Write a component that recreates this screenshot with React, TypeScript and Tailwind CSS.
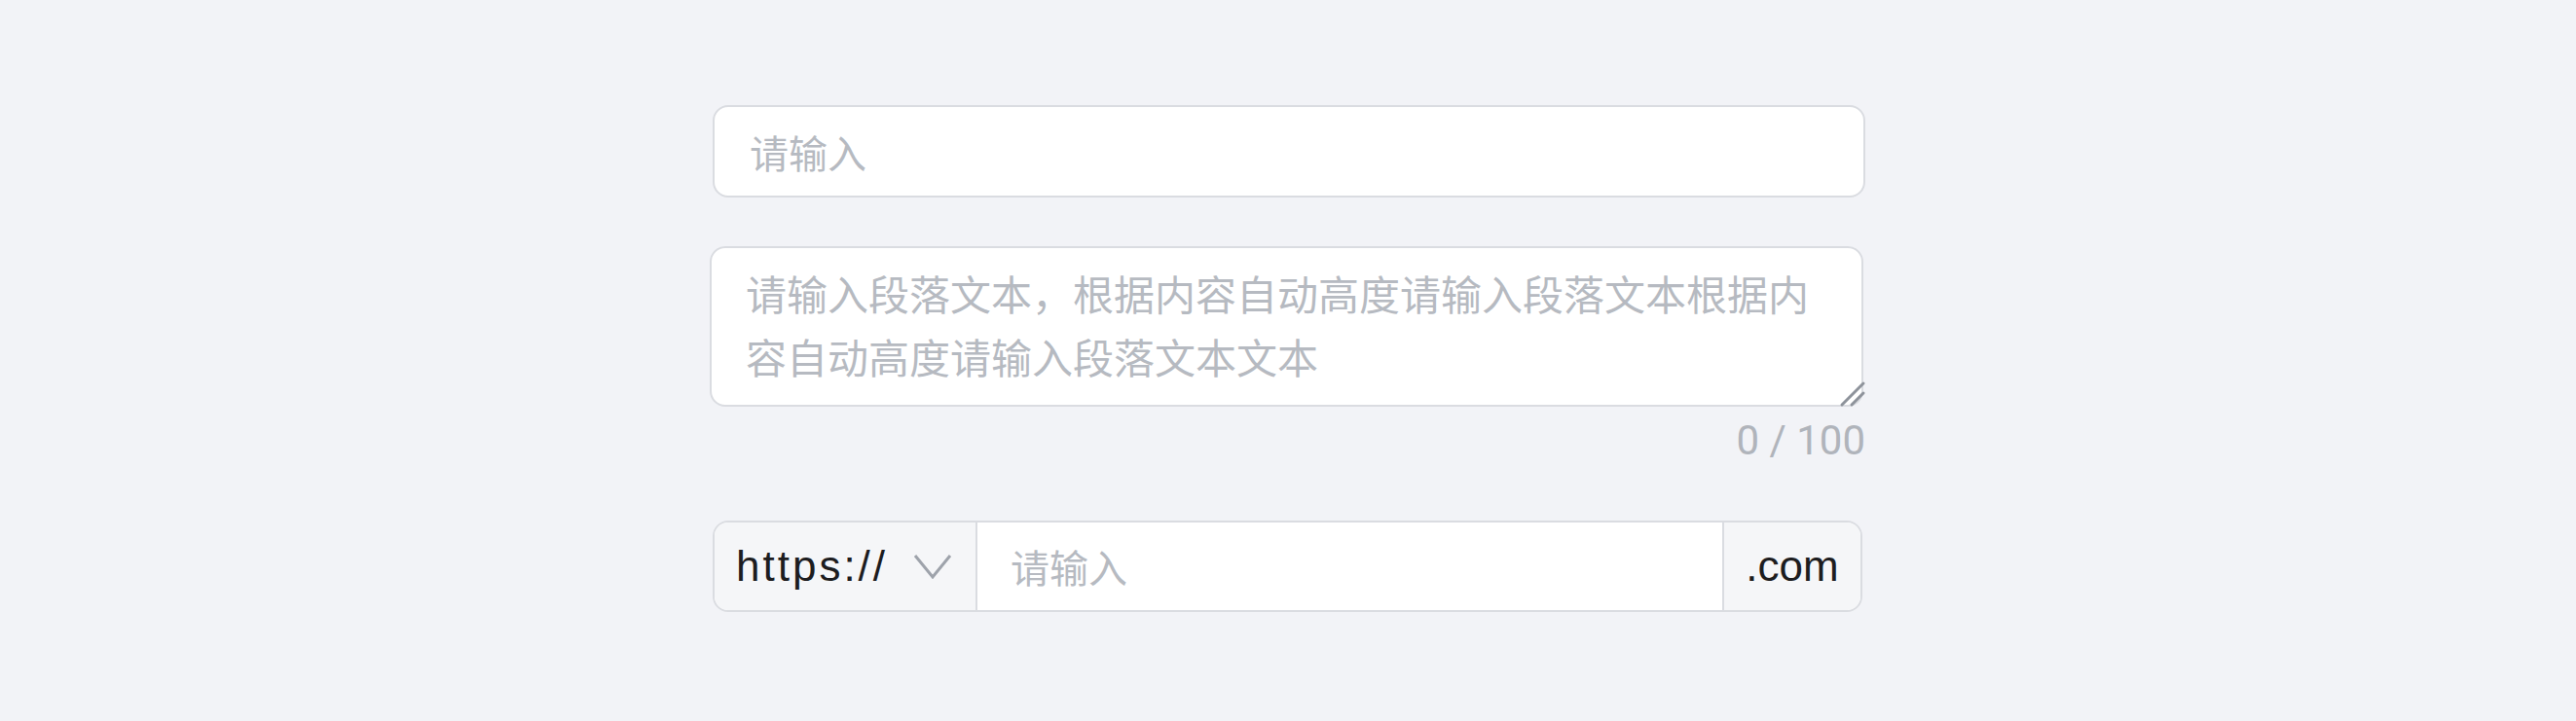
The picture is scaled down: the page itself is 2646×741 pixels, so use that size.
import React from "react";

export default function App() {
  const cjk = { fontFamily: '"Noto Sans CJK SC", "Noto Sans", sans-serif' };
  return (
    <div className="min-h-[741px] w-full bg-[#f2f3f7] pt-[108px]" style={cjk}>
      <div className="mx-auto flex w-[1184px] translate-x-[1px] flex-col">
        {/* Input 1 */}
        <input
          className="h-[95px] w-full rounded-[16px] border-2 border-[#dadce1] bg-white px-[36px] text-[40px] text-[#1f2329] outline-none placeholder:text-[#b6bac1]"
          placeholder="请输入"
        />

        {/* Textarea */}
        <div className="relative ml-[-3px] mt-[50px] w-[1185px]">
          <textarea
            className="block h-[165px] w-full resize-none rounded-[16px] border-2 border-[#dadce1] bg-white pb-[10px] pl-[35px] pr-[40px] pt-[13px] text-[42px] leading-[65px] text-[#1f2329] outline-none placeholder:text-[#b6bac1]"
            placeholder="请输入段落文本，根据内容自动高度请输入段落文本根据内容自动高度请输入段落文本文本"
          />
          <svg
            className="absolute bottom-[-3px] right-[-3px]"
            width="30"
            height="30"
            viewBox="0 0 30 30"
          >
            <line x1="5" y1="25" x2="27" y2="3" stroke="#8e939b" strokeWidth="3" strokeLinecap="round" />
            <line x1="15" y1="25" x2="27" y2="13" stroke="#8e939b" strokeWidth="3" strokeLinecap="round" />
          </svg>
        </div>

        {/* Counter */}
        <div
          className="mt-[10px] h-[50px] text-right text-[42px] leading-[50px] text-[#b0b4bb]"
          style={{ fontFamily: 'Roboto, "Noto Sans", sans-serif' }}
        >
          0 / 100
        </div>

        {/* Group */}
        <div className="mt-[57px] flex h-[94px] w-[1181px] overflow-hidden rounded-[16px] border-2 border-[#dadce1] bg-white">
          <div
            className="flex w-[270px] shrink-0 items-center justify-between border-r-2 border-[#dadce1] bg-[#f5f6f8] pl-[22px] pr-[24px] text-[44px] tracking-[3px] text-[#1d1d1f]"
            style={{ fontFamily: '"Liberation Sans", Arial, sans-serif' }}
          >
            <span>https://</span>
            <svg width="40" height="26" viewBox="0 0 40 26">
              <polyline points="2,2 20,24 38,2" fill="none" stroke="#9ea3ab" strokeWidth="3" />
            </svg>
          </div>
          <input
            className="min-w-0 flex-1 bg-white px-[34px] text-[40px] text-[#1f2329] outline-none placeholder:text-[#b6bac1]"
            placeholder="请输入"
          />
          <div
            className="flex w-[142px] shrink-0 items-center justify-center border-l-2 border-[#dadce1] bg-[#f5f6f8] text-[44px] text-[#1d1d1f]"
            style={{ fontFamily: '"Liberation Sans", Arial, sans-serif' }}
          >
            .com
          </div>
        </div>
      </div>
    </div>
  );
}
